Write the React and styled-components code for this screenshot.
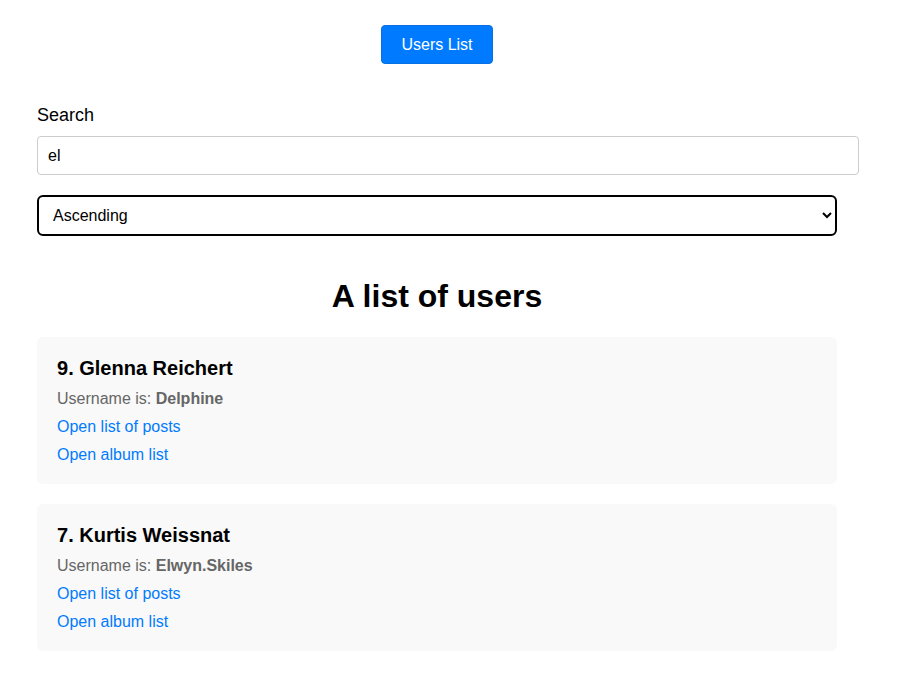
import React, { useState } from "react";
import styled, { createGlobalStyle } from "styled-components";

const GlobalStyle = createGlobalStyle`
  body {
    margin: 0;
    background: #fff;
    font-family: "Liberation Sans", Arial, sans-serif;
    color: #000;
  }
`;

const users = [
  { id: 9, name: "Glenna Reichert", username: "Delphine" },
  { id: 7, name: "Kurtis Weissnat", username: "Elwyn.Skiles" },
];

const App = () => {
  const [query, setQuery] = useState("el");
  const [order, setOrder] = useState("asc");

  return (
    <>
      <GlobalStyle />
      <Page>
        <Nav>
          <NavButton>Users List</NavButton>
        </Nav>

        <Field>
          <Label htmlFor="search">Search</Label>
          <SearchInput
            id="search"
            value={query}
            onChange={(e) => setQuery(e.target.value)}
          />
        </Field>

        <SortSelect value={order} onChange={(e) => setOrder(e.target.value)}>
          <option value="asc">Ascending</option>
          <option value="desc">Descending</option>
        </SortSelect>

        <Heading>A list of users</Heading>

        <List>
          {users.map((user) => (
            <Card key={user.id}>
              <CardTitle>
                {user.id}. {user.name}
              </CardTitle>
              <Line>
                Username is: <b>{user.username}</b>
              </Line>
              <Line>
                <LinkText href="#">Open list of posts</LinkText>
              </Line>
              <Line>
                <LinkText href="#">Open album list</LinkText>
              </Line>
            </Card>
          ))}
        </List>
      </Page>
    </>
  );
};

export default App;

const Page = styled.div`
  width: 800px;
  margin-left: 37px;
  padding-top: 25px;
  padding-bottom: 30px;
`;

const Nav = styled.div`
  display: flex;
  justify-content: center;
  margin-bottom: 40px;
`;

const NavButton = styled.button`
  width: 112px;
  height: 39px;
  background: #007bff;
  color: #fff;
  border: 1px solid #0a6fe0;
  border-radius: 4px;
  font-family: "Liberation Sans", Arial, sans-serif;
  font-size: 16px;
  cursor: pointer;
`;

const Field = styled.div`
  display: flex;
  flex-direction: column;
`;

const Label = styled.label`
  font-size: 18px;
  line-height: 22px;
  margin-bottom: 10px;
`;

const SearchInput = styled.input`
  width: 100%;
  height: 37px;
  padding: 0 10px;
  border: 1px solid #ccc;
  border-radius: 4px;
  font-family: "Liberation Sans", Arial, sans-serif;
  font-size: 16px;
  color: #000;
  outline: none;
`;

const SortSelect = styled.select`
  display: block;
  box-sizing: border-box;
  width: 800px;
  height: 41px;
  margin-top: 20px;
  padding: 0 10px;
  border: 2px solid #000;
  border-radius: 6px;
  background: #fff;
  font-family: "Liberation Sans", Arial, sans-serif;
  font-size: 16px;
  color: #000;
`;

const Heading = styled.h2`
  margin: 40px 0 21px;
  text-align: center;
  font-size: 32px;
  line-height: 40px;
  font-weight: bold;
`;

const List = styled.div`
  display: flex;
  flex-direction: column;
  gap: 20px;
`;

const Card = styled.div`
  background: #f9f9f9;
  border-radius: 6px;
  padding: 20px 20px 15px;
`;

const CardTitle = styled.h3`
  margin: 0 0 5px;
  font-size: 20px;
  line-height: 23px;
  font-weight: bold;
`;

const Line = styled.div`
  font-size: 16px;
  line-height: 28px;
  color: #666;

  b {
    font-weight: bold;
  }
`;

const LinkText = styled.a`
  color: #007bff;
  text-decoration: none;
`;
